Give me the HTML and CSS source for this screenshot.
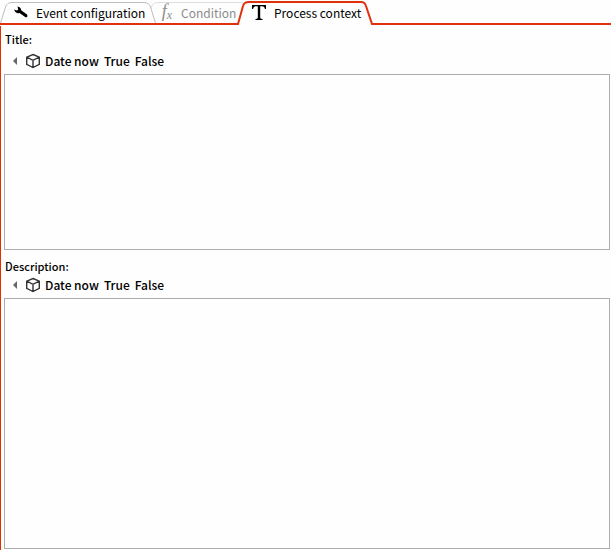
FILE: index.html
```html
<!DOCTYPE html>
<html lang="en">
<head>
<meta charset="utf-8">
<title>Process context</title>
<link rel="stylesheet" href="styles.css">
</head>
<body>
<svg class="defs" aria-hidden="true">
  <symbol id="cap-left" viewBox="0 0 12 25"><path d="M0.500 23 L5.500 7 Q7 2.500 12 2.500 V23" stroke="none"/><path d="M0.500 23 L5.500 7 Q7 2.500 12 2.500" fill="none"/></symbol>
  <symbol id="cap-right" viewBox="0 0 12 25"><path d="M0 23 V2.500 Q5 2.500 6.500 7 L11.500 23" stroke="none"/><path d="M0 2.500 Q5 2.500 6.500 7 L11.500 23" fill="none"/></symbol>
  <symbol id="active-left" viewBox="0 0 12 25"><path d="M1 25 L6 6 Q7 2 12 2 V25" stroke="none"/><path d="M0 24 H1 L6 6 Q7 2 12 2" fill="none"/></symbol>
  <symbol id="active-right" viewBox="0 0 12 25"><path d="M0 25 V2 Q4 2 5 6 L11 25" stroke="none"/><path d="M0 2 Q4 2 5 6 L11 24 H12" fill="none"/></symbol>
  <symbol id="cube" viewBox="0 0 16 16"><path d="M8 1.500 L14.300 4.200 V11.300 L8 14.500 L1.700 11.300 V4.200 Z M1.700 4.200 L8 7.300 L14.300 4.200 M8 7.300 V14.500"/></symbol>
</svg>
<nav class="tabs" role="tablist">
  <button class="tab first" role="tab" type="button">
    <svg class="cap" aria-hidden="true"><use href="#cap-left"/></svg>
    <span class="face">
      <svg class="icon" viewBox="0 0 16 16" aria-hidden="true"><path d="M2 4.500 L5 5.500 L6.200 4.500 L5.500 1.500 Q9 2 9.200 5.300 L15 9.500 Q16 11 15 12 Q14 12.800 12.800 11.800 L7.500 8 Q3.500 8.800 2 4.500 Z"/></svg>
      <span>Event configuration</span>
    </span>
    <svg class="cap" aria-hidden="true"><use href="#cap-right"/></svg>
  </button>
  <button class="tab disabled" role="tab" type="button" disabled>
    <svg class="cap" aria-hidden="true"><use href="#cap-left"/></svg>
    <span class="face">
      <span class="fx"><i>f</i><sub>x</sub></span>
      <span>Condition</span>
    </span>
  </button>
  <button class="tab active" role="tab" type="button" aria-selected="true">
    <svg class="cap" aria-hidden="true"><use href="#active-left"/></svg>
    <span class="face">
      <svg class="icon" viewBox="0 0 16 16" aria-hidden="true"><path d="M1 0 H15 V4 H14 Q13.500 1.200 11.500 1.200 H9.200 V12.500 Q9.200 14 11.500 14 V15 H4.500 V14 Q6.800 14 6.800 12.500 V1.200 H4.500 Q2.500 1.200 2 4 H1 Z"/></svg>
      <span>Process context</span>
    </span>
    <svg class="cap" aria-hidden="true"><use href="#active-right"/></svg>
  </button>
</nav>
<main class="panel">
  <section class="field">
    <label class="name" for="title">Title:</label>
    <div class="tools">
      <button class="arrow" type="button" aria-label="Collapse"></button>
      <button class="tool" type="button" aria-label="Insert object"><svg class="cube" aria-hidden="true"><use href="#cube"/></svg></button>
      <button class="tool" type="button">Date now</button>
      <button class="tool" type="button">True</button>
      <button class="tool" type="button">False</button>
    </div>
    <textarea class="box" id="title"></textarea>
  </section>
  <section class="field tall">
    <label class="name" for="description">Description:</label>
    <div class="tools">
      <button class="arrow" type="button" aria-label="Collapse"></button>
      <button class="tool" type="button" aria-label="Insert object"><svg class="cube" aria-hidden="true"><use href="#cube"/></svg></button>
      <button class="tool" type="button">Date now</button>
      <button class="tool" type="button">True</button>
      <button class="tool" type="button">False</button>
    </div>
    <textarea class="box" id="description"></textarea>
  </section>
</main>
</body>
</html>
```
FILE: styles.css
```css
* { box-sizing: border-box; }
body {
  margin: 0;
  min-height: 100vh;
  display: flex;
  flex-direction: column;
  background: #fefefe;
  color: #000;
  font: 12px/16px "Noto Sans CJK SC", "Open Sans", sans-serif;
}
button { margin: 0; padding: 0; border: 0; background: none; color: inherit; font: inherit; }
.defs { position: absolute; width: 0; height: 0; }
.tabs {
  display: flex;
  height: 25px;
  background: linear-gradient(#e0300c, #e0300c) bottom / 100% 2px no-repeat;
}
.tab { display: flex; height: 25px; --line: #bdbdbd; --stroke: 1px; }
.cap { width: 12px; height: 25px; flex: none; fill: #fefefe; stroke: var(--line); stroke-width: var(--stroke); }
.face {
  flex: 1;
  min-width: 0;
  display: flex;
  align-items: center;
  gap: 7px;
  height: 21px;
  margin-top: 2px;
  border-top: 1px solid var(--line);
  background: #fefefe;
  white-space: nowrap;
}
.face > * { position: relative; z-index: 3; }
.icon { flex: none; width: 16px; height: 16px; }
.first { width: 156px; position: relative; z-index: 1; }
.first .face { gap: 8px; }
.disabled { --line: #dedede; color: #8c8c8c; width: 97px; margin-left: -10px; }
.disabled .face { padding-left: 2px; }
.fx { width: 14px; font-family: "Liberation Serif", serif; font-size: 18px; }
.fx sub { font-size: 12px; font-style: italic; vertical-align: -2px; }
.active {
  --line: #e0300c;
  --stroke: 2px;
  width: 136px;
  margin-left: -6px;
  position: relative;
  z-index: 2;
}
.active .face { height: 24px; margin-top: 1px; padding: 0 0 2px 2px; border-top-width: 2px; }
.panel {
  flex: 1;
  display: flex;
  flex-direction: column;
  gap: 8px;
  margin-top: 1px;
  padding: 5px 1px 1px 3px;
  border-left: 1px solid #e03000;
}
.field { display: flex; flex-direction: column; }
.tall { flex: 1; }
.name { padding: 0 1px; font-size: 11px; font-weight: 500; }
.tools { display: flex; align-items: center; gap: 5px; height: 27px; padding: 1px 0 0 9px; font-weight: 500; }
.tall .tools { height: 24px; padding: 0 0 2px 9px; }
.arrow { border: 4px solid transparent; border-left: 0; border-right-color: #666; margin-right: 3px; }
.cube { display: block; width: 16px; height: 16px; margin-right: -1px; fill: none; stroke: #333; stroke-width: 1.4px; }
.box {
  display: block;
  width: 100%;
  height: 176px;
  margin: 0;
  padding: 4px;
  border: 1px solid #adadb0;
  border-radius: 0;
  background: #fefefe;
  resize: none;
  outline: 0;
  font: inherit;
}
.tall .box { flex: 1; }
```
